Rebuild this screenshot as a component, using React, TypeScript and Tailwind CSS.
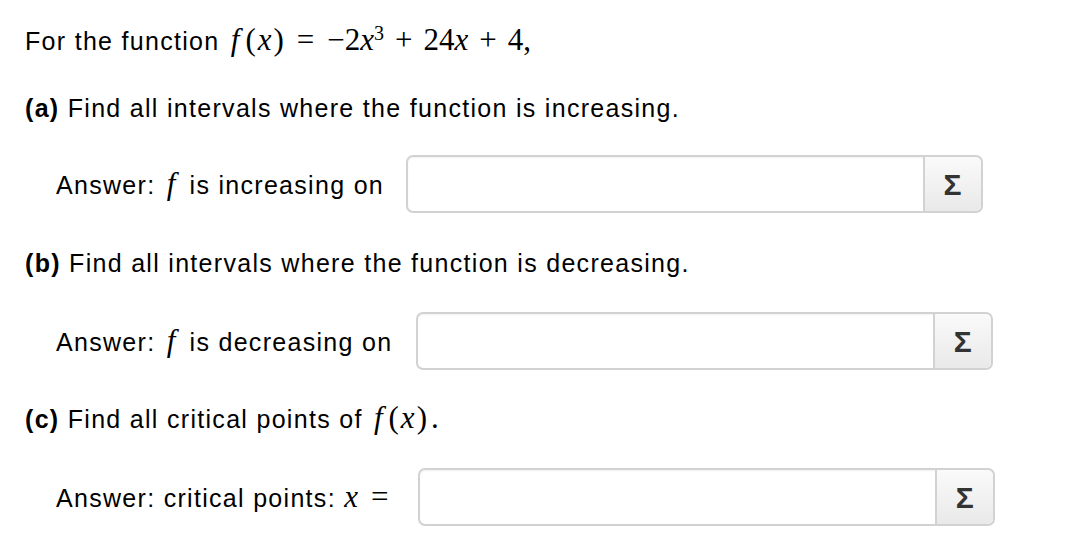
import React from "react";

const sans = { fontFamily: '"Liberation Sans", Arial, sans-serif' };

function Mi({ children }: { children: React.ReactNode }) {
  return <span className="italic">{children}</span>;
}

function F() {
  return <span className="ml-[3px] mr-[6px] italic">f</span>;
}

function X() {
  return <span className="mx-[2px] italic">x</span>;
}

function Rel({ children }: { children: React.ReactNode }) {
  return <span className="mx-[13px]">{children}</span>;
}

function Bin({ children }: { children: React.ReactNode }) {
  return <span className="mx-[11px]">{children}</span>;
}

function Math({ children }: { children: React.ReactNode }) {
  return (
    <span className="font-['Liberation_Serif',serif] text-[31px] tracking-normal whitespace-nowrap">
      {children}
    </span>
  );
}

function AnswerBox() {
  return (
    <div className="flex h-[58px] w-[577px] rounded-[7px] border-2 border-[#d2d2d2] bg-white shadow-[inset_0_1px_2px_rgba(0,0,0,0.06)]">
      <div className="flex-1" />
      <button className="flex w-[58px] items-center justify-center rounded-r-[6px] border-l-2 border-[#d2d2d2] bg-gradient-to-b from-[#fafafa] to-[#e9e9e9] text-[30px] font-bold text-[#333]">
        Σ
      </button>
    </div>
  );
}

function AnswerRow({ children, gap }: { children: React.ReactNode; gap: string }) {
  return (
    <div className={`flex h-[58px] items-center pl-[31px] ${gap}`}>
      <div className="whitespace-nowrap">{children}</div>
      <AnswerBox />
    </div>
  );
}

export default function App() {
  return (
    <div
      className="h-[550px] w-[1066px] bg-white pt-[26px] pl-[25px] text-[25px] text-black tracking-[1.3px]"
      style={sans}
    >
      <div className="h-[28px] leading-[28px] whitespace-nowrap">
        For the function{" "}
        <Math>
          <F />(<X />)<Rel>=</Rel>−2<Mi>x</Mi>
          <sup className="text-[20px]">3</sup>
          <Bin>+</Bin>24<Mi>x</Mi>
          <Bin>+</Bin>4,
        </Math>
      </div>

      <div className="mt-[40px] h-[28px] leading-[28px] whitespace-nowrap">
        <b>(a)</b> Find all intervals where the function is increasing.
      </div>
      <div className="mt-[33px]">
        <AnswerRow gap="gap-[22px]">
          Answer: <Math><F /></Math> is increasing on
        </AnswerRow>
      </div>

      <div className="mt-[36px] h-[28px] leading-[28px] whitespace-nowrap">
        <b>(b)</b> Find all intervals where the function is decreasing.
      </div>
      <div className="mt-[35px]">
        <AnswerRow gap="gap-[24px]">
          Answer: <Math><F /></Math> is decreasing on
        </AnswerRow>
      </div>

      <div className="mt-[34px] h-[28px] leading-[28px] whitespace-nowrap">
        <b>(c)</b> Find all critical points of{" "}
        <Math>
          <F />(<X />)<span className="ml-[4px]">.</span>
        </Math>
      </div>
      <div className="mt-[36px]">
        <AnswerRow gap="gap-[17px]">
          Answer: critical points:{" "}
          <Math>
            <Mi>x</Mi>
            <Rel>=</Rel>
          </Math>
        </AnswerRow>
      </div>
    </div>
  );
}
